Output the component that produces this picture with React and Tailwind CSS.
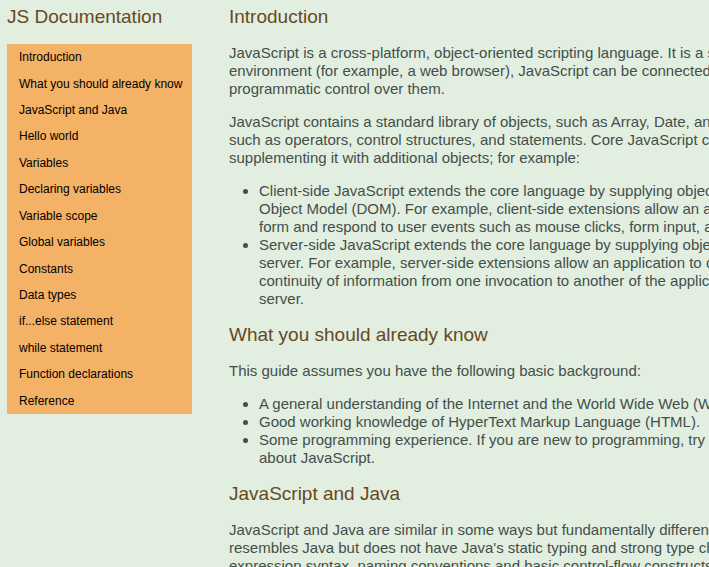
const topics = [
  "Introduction",
  "What you should already know",
  "JavaScript and Java",
  "Hello world",
  "Variables",
  "Declaring variables",
  "Variable scope",
  "Global variables",
  "Constants",
  "Data types",
  "if...else statement",
  "while statement",
  "Function declarations",
  "Reference",
];

const slug = (text) => text.replace(/[^A-Za-z]+/g, "_");

function Heading({ children }) {
  return <h2 className="text-[19px] leading-6 text-[#67491f]">{children}</h2>;
}

function Lines({ lines }) {
  return lines.map((line) => (
    <span key={line} className="block">
      {line}{" "}
    </span>
  ));
}

function Paragraph({ lines }) {
  return (
    <p>
      <Lines lines={lines} />
    </p>
  );
}

function Bullets({ items }) {
  return (
    <ul className="list-disc pl-[30px]">
      {items.map((lines) => (
        <li key={lines[0]}>
          <Lines lines={lines} />
        </li>
      ))}
    </ul>
  );
}

function Section({ title, children }) {
  return (
    <section id={slug(title)} className="flex flex-col gap-[15px]">
      <Heading>{title}</Heading>
      {children}
    </section>
  );
}

export default function App() {
  return (
    <div className="flex h-screen gap-[37px] overflow-hidden bg-[#e2eedf] pt-[5px] pl-[7px] font-['Liberation_Sans',Arial,sans-serif]">
      <nav className="flex w-[185px] shrink-0 flex-col gap-[15px]">
        <h1 className="text-[19px] leading-6 whitespace-nowrap text-[#67491f]">JS Documentation</h1>
        <ul className="grid h-[370px] auto-rows-fr bg-[#f4b266] text-xs text-black">
          {topics.map((topic) => (
            <li key={topic} className="flex items-center px-3">
              <a href={"#" + slug(topic)} className="whitespace-nowrap">
                {topic}
              </a>
            </li>
          ))}
        </ul>
      </nav>

      <main className="flex min-w-0 flex-1 flex-col gap-[15px] overflow-hidden text-[15px] leading-[18px] whitespace-nowrap text-[#424f4b]">
        <Section title="Introduction">
          <Paragraph
            lines={[
              "JavaScript is a cross-platform, object-oriented scripting language. It is a small",
              "environment (for example, a web browser), JavaScript can be connected to",
              "programmatic control over them.",
            ]}
          />
          <Paragraph
            lines={[
              "JavaScript contains a standard library of objects, such as Array, Date, and",
              "such as operators, control structures, and statements. Core JavaScript can",
              "supplementing it with additional objects; for example:",
            ]}
          />
          <Bullets
            items={[
              [
                "Client-side JavaScript extends the core language by supplying objects",
                "Object Model (DOM). For example, client-side extensions allow an application",
                "form and respond to user events such as mouse clicks, form input, and",
              ],
              [
                "Server-side JavaScript extends the core language by supplying objects",
                "server. For example, server-side extensions allow an application to communicate",
                "continuity of information from one invocation to another of the application,",
                "server.",
              ],
            ]}
          />
        </Section>

        <Section title="What you should already know">
          <Paragraph lines={["This guide assumes you have the following basic background:"]} />
          <Bullets
            items={[
              ["A general understanding of the Internet and the World Wide Web (WWW)."],
              ["Good working knowledge of HyperText Markup Language (HTML)."],
              [
                "Some programming experience. If you are new to programming, try one",
                "about JavaScript.",
              ],
            ]}
          />
        </Section>

        <Section title="JavaScript and Java">
          <Paragraph
            lines={[
              "JavaScript and Java are similar in some ways but fundamentally different",
              "resembles Java but does not have Java's static typing and strong type checking.",
              "expression syntax, naming conventions and basic control-flow constructs",
            ]}
          />
        </Section>
      </main>
    </div>
  );
}
